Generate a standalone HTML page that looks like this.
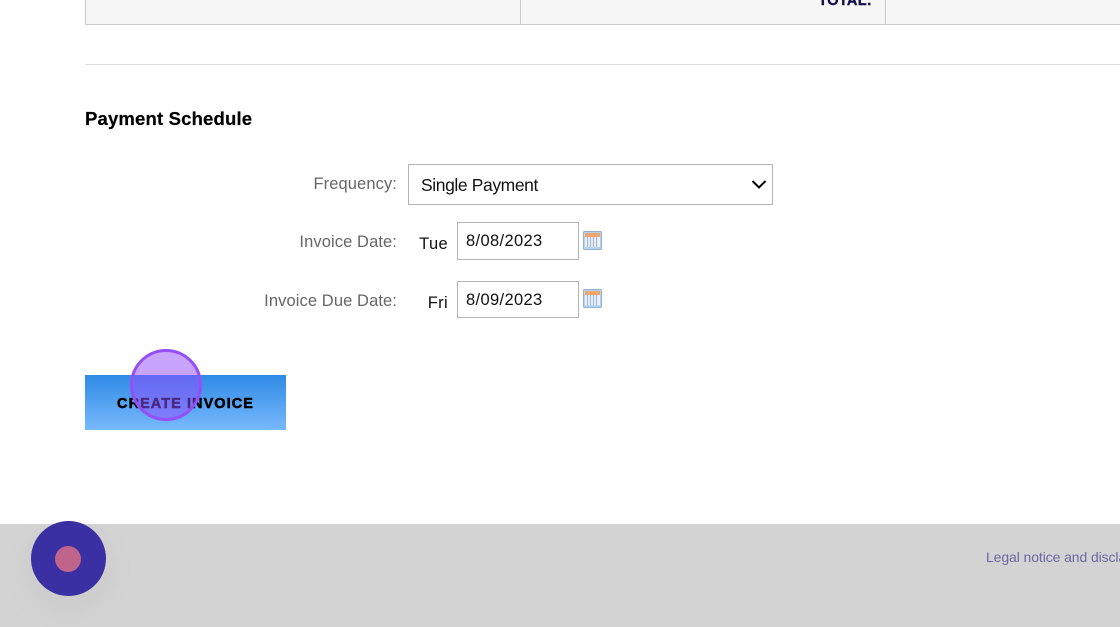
<!DOCTYPE html>
<html>
<head>
<meta charset="utf-8">
<style>
html,body{margin:0;padding:0;background:#fff;}
#p{position:relative;width:1120px;height:627px;overflow:hidden;background:#fff;font-family:"Liberation Sans",sans-serif;}
#p div{position:absolute;box-sizing:border-box;}
.t{white-space:nowrap;line-height:20px;height:20px;}
.lbl{color:#666;font-size:16.5px;text-align:right;letter-spacing:.1px;}
.val{color:#111;font-size:16.5px;letter-spacing:.35px;}
.inp{background:#fff;border:1px solid #b5b5b5;}
</style>
</head>
<body>
<div id="p">
  <div style="left:85px;top:-10px;width:1040px;height:35px;background:#f6f6f6;border:1px solid #ccc;"></div>
  <div style="left:520px;top:0;width:1px;height:24px;background:#ccc;"></div>
  <div style="left:885px;top:0;width:1px;height:24px;background:#ccc;"></div>
  <div class="t" style="left:790px;width:82px;top:-9px;text-align:right;color:#14104f;font-weight:bold;font-size:14.5px;letter-spacing:.3px;-webkit-text-stroke:.4px #14104f;">TOTAL:</div>
  <div style="left:85px;top:64px;width:1035px;height:1px;background:#ddd;"></div>

  <div class="t" style="left:85px;top:109px;font-size:18.5px;font-weight:bold;color:#000;letter-spacing:.17px;-webkit-text-stroke:.2px #000;">Payment Schedule</div>

  <div class="t lbl" style="left:200px;width:197px;top:174px;">Frequency:</div>
  <div class="t lbl" style="left:200px;width:197px;top:232px;">Invoice Date:</div>
  <div class="t lbl" style="left:200px;width:197px;top:291px;">Invoice Due Date:</div>

  <div class="inp" style="left:408px;top:164px;width:365px;height:41px;"></div>
  <div class="t val" style="left:421px;top:175px;font-size:17.5px;letter-spacing:-.4px;">Single Payment</div>
  <svg style="position:absolute;left:751px;top:179px;" width="16" height="11" viewBox="0 0 16 11"><path d="M1.5 2 L8 8.5 L14.5 2" fill="none" stroke="#000" stroke-width="2"/></svg>

  <div class="t val" style="left:400px;width:48px;text-align:right;top:234px;">Tue</div>
  <div class="t val" style="left:400px;width:48px;text-align:right;top:293px;">Fri</div>

  <div class="inp" style="left:457px;top:222px;width:122px;height:38px;"></div>
  <div class="t val" style="left:466px;top:231px;letter-spacing:.35px;">8/08/2023</div>
  <div class="inp" style="left:457px;top:281px;width:122px;height:37px;"></div>
  <div class="t val" style="left:466px;top:290px;letter-spacing:.35px;">8/09/2023</div>

  <svg style="position:absolute;left:583px;top:231px;" width="19" height="19" viewBox="0 0 19 19">
    <rect x=".5" y=".5" width="18" height="18" rx="1" fill="#b9d2ee" stroke="#8fb0d8"/>
    <rect x="2" y="2" width="15" height="4" fill="#f3a66c"/>
    <rect x="2" y="6" width="15" height="10" fill="#eef2f9"/>
    <path d="M4.5 6v10M7.5 6v10M10.5 6v10M13.5 6v10" stroke="#a5b9d4" stroke-width="1.2"/>
  </svg>
  <svg style="position:absolute;left:583px;top:289px;" width="19" height="19" viewBox="0 0 19 19">
    <rect x=".5" y=".5" width="18" height="18" rx="1" fill="#b9d2ee" stroke="#8fb0d8"/>
    <rect x="2" y="2" width="15" height="4" fill="#f3a66c"/>
    <rect x="2" y="6" width="15" height="10" fill="#eef2f9"/>
    <path d="M4.5 6v10M7.5 6v10M10.5 6v10M13.5 6v10" stroke="#a5b9d4" stroke-width="1.2"/>
  </svg>

  <div style="left:85px;top:375px;width:201px;height:55px;background:linear-gradient(#2f8ae4,#78b9fd);"></div>
  <div class="t" style="left:85px;width:201px;top:394px;text-align:center;color:#000;font-weight:bold;font-size:14.5px;letter-spacing:1.05px;-webkit-text-stroke:.5px #000;">CREATE INVOICE</div>
  <div style="left:130px;top:349px;width:72px;height:72px;border-radius:50%;background:rgba(147,76,255,.51);border:3px solid #9550f5;"></div>

  <div style="left:0;top:524px;width:1120px;height:103px;background:#d3d3d3;"></div>
  <div class="t" style="left:986px;top:547px;color:#6d68a4;font-size:14px;letter-spacing:-.1px;">Legal notice and disclaimer</div>

  <div style="left:31px;top:521px;width:75px;height:75px;border-radius:50%;background:#3a2fa3;box-shadow:0 12px 40px rgba(0,0,0,.05);"></div>
  <div style="left:55px;top:546px;width:26px;height:26px;border-radius:50%;background:#c0648c;"></div>
</div>
</body>
</html>
